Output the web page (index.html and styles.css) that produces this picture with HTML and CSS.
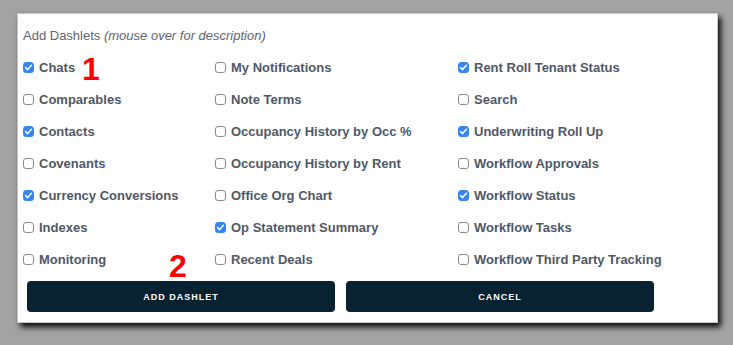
FILE: index.html
```html
<!DOCTYPE html>
<html lang="en">
<head>
    <meta charset="UTF-8">
    <title>Add Dashlets</title>
    <link rel="stylesheet" href="styles.css">
</head>
<body>
    <div class="dialog">
        <p class="title">Add Dashlets <em>(mouse over for description)</em></p>

        <div class="dashlet-grid">
            <label class="item"><span class="box checked"></span>Chats</label>
            <label class="item"><span class="box"></span>My Notifications</label>
            <label class="item"><span class="box checked"></span>Rent Roll Tenant Status</label>

            <label class="item"><span class="box"></span>Comparables</label>
            <label class="item"><span class="box"></span>Note Terms</label>
            <label class="item"><span class="box"></span>Search</label>

            <label class="item"><span class="box checked"></span>Contacts</label>
            <label class="item"><span class="box"></span>Occupancy History by Occ %</label>
            <label class="item"><span class="box checked"></span>Underwriting Roll Up</label>

            <label class="item"><span class="box"></span>Covenants</label>
            <label class="item"><span class="box"></span>Occupancy History by Rent</label>
            <label class="item"><span class="box"></span>Workflow Approvals</label>

            <label class="item"><span class="box checked"></span>Currency Conversions</label>
            <label class="item"><span class="box"></span>Office Org Chart</label>
            <label class="item"><span class="box checked"></span>Workflow Status</label>

            <label class="item"><span class="box"></span>Indexes</label>
            <label class="item"><span class="box checked"></span>Op Statement Summary</label>
            <label class="item"><span class="box"></span>Workflow Tasks</label>

            <label class="item"><span class="box"></span>Monitoring</label>
            <label class="item"><span class="box"></span>Recent Deals</label>
            <label class="item"><span class="box"></span>Workflow Third Party Tracking</label>
        </div>

        <div class="actions">
            <button class="btn">Add Dashlet</button>
            <button class="btn">Cancel</button>
        </div>

        <!-- marcações -->
        <span class="marker marker-1">1</span>
        <span class="marker marker-2">2</span>
    </div>
</body>
</html>
```

FILE: styles.css
```css
* {
    margin: 0;
    padding: 0;
    box-sizing: border-box;
    font-family: 'Liberation Sans', Arial, sans-serif;
}

body {
    background: #a3a3a3;
    width: 733px;
    height: 345px;
    overflow: hidden;
    padding: 13px 0 0 17px;
}

.dialog {
    position: relative;
    width: 701px;
    height: 310px;
    background: #fff;
    border: 1px solid #c8c8c8;
    box-shadow: 3px 4px 6px rgba(0, 0, 0, 0.95);
    padding: 14px 0 0 5px;
}

.title {
    font-size: 13px;
    color: #5d6570;
    line-height: 16px;
    margin-bottom: 15px;
}

.title em {
    font-style: italic;
}

.dashlet-grid {
    display: grid;
    grid-template-columns: 192px 243px auto;
    grid-auto-rows: 32px;
}

.item {
    display: flex;
    align-items: center;
    gap: 5px;
    font-size: 13px;
    font-weight: bold;
    color: #4f5866;
    height: 16px;
}

.box {
    width: 11px;
    height: 11px;
    border: 1px solid #8a8a8a;
    border-radius: 3px;
    background: #fff;
    flex-shrink: 0;
}

.box.checked {
    border-color: #3a86f0;
    background: #3a86f0 url("data:image/svg+xml;utf8,<svg xmlns='http://www.w3.org/2000/svg' viewBox='0 0 11 11'><path d='M2.6 5.6 L4.6 7.6 L8.4 3.2' fill='none' stroke='white' stroke-width='1.5' stroke-linecap='round' stroke-linejoin='round'/></svg>") center / 11px 11px no-repeat;
}

.actions {
    display: flex;
    gap: 11px;
    margin: -2px 0 0 4px;
}

.btn {
    width: 308px;
    height: 31px;
    background: #082231;
    color: #fff;
    border: none;
    border-radius: 4px;
    font-size: 9px;
    font-weight: bold;
    letter-spacing: 1px;
    text-transform: uppercase;
}

.marker {
    position: absolute;
    color: #f00;
    font-size: 32px;
    font-weight: bold;
    line-height: 1;
}

.marker-1 {
    left: 64px;
    top: 39px;
}

.marker-2 {
    left: 151px;
    top: 236px;
}
```
